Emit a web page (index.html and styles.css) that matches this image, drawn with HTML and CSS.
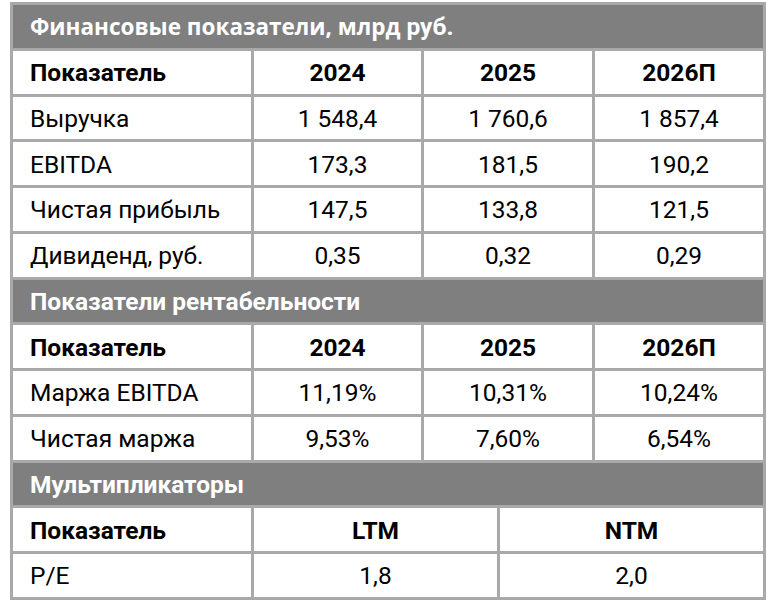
FILE: index.html
```html
<!DOCTYPE html>
<html lang="ru">
<head>
<meta charset="utf-8">
<title>Финансовые показатели</title>
<link rel="stylesheet" href="styles.css">
</head>
<body>
<div class="sheet">
  <div class="row band"><div class="cell head first">Финансовые показатели, млрд <span class="alt">руб.</span></div></div>
  <div class="row four bold">
    <div class="cell label">Показатель</div><div class="cell">2024</div><div class="cell">2025</div><div class="cell">2026П</div>
  </div>
  <div class="row four">
    <div class="cell label">Выручка</div><div class="cell">1 548,4</div><div class="cell">1 760,6</div><div class="cell">1 857,4</div>
  </div>
  <div class="row four">
    <div class="cell label">EBITDA</div><div class="cell">173,3</div><div class="cell">181,5</div><div class="cell">190,2</div>
  </div>
  <div class="row four">
    <div class="cell label">Чистая прибыль</div><div class="cell">147,5</div><div class="cell">133,8</div><div class="cell">121,5</div>
  </div>
  <div class="row four">
    <div class="cell label">Дивиденд, руб.</div><div class="cell">0,35</div><div class="cell">0,32</div><div class="cell">0,29</div>
  </div>
  <div class="row band"><div class="cell head">Показатели рентабельности</div></div>
  <div class="row four bold">
    <div class="cell label">Показатель</div><div class="cell">2024</div><div class="cell">2025</div><div class="cell">2026П</div>
  </div>
  <div class="row four">
    <div class="cell label">Маржа EBITDA</div><div class="cell">11,19%</div><div class="cell">10,31%</div><div class="cell">10,24%</div>
  </div>
  <div class="row four">
    <div class="cell label">Чистая маржа</div><div class="cell">9,53%</div><div class="cell">7,60%</div><div class="cell">6,54%</div>
  </div>
  <div class="row band"><div class="cell head">Мультипликаторы</div></div>
  <div class="row three bold">
    <div class="cell label">Показатель</div><div class="cell">LTM</div><div class="cell">NTM</div>
  </div>
  <div class="row three">
    <div class="cell label">P/E</div><div class="cell">1,8</div><div class="cell">2,0</div>
  </div>
</div>
</body>
</html>
```

FILE: styles.css
```css
html, body {
  margin: 0;
  padding: 0;
  background: #ffffff;
}
body {
  padding: 2px 0 0 10px;
  font-family: Roboto, "Noto Sans", sans-serif;
  color: #000000;
}
.sheet {
  width: 756px;
  box-sizing: border-box;
  background: #a9a9a9;
  padding: 3px;
  display: flex;
  flex-direction: column;
  gap: 3px;
}
.row {
  display: grid;
  gap: 3px;
  height: 42.75px;
}
.band { grid-template-columns: 1fr; }
.four { grid-template-columns: 238px 167px 168px 168px; }
.three { grid-template-columns: 238px 243px 263px; }
.cell {
  background: #ffffff;
  display: flex;
  align-items: center;
  justify-content: center;
  font-size: 24.5px;
  white-space: nowrap;
  padding-top: 1px;
  box-sizing: border-box;
}
.cell.label {
  justify-content: flex-start;
  padding-left: 17px;
}
.bold .cell { font-weight: 700; }
.cell.head {
  background: #7f7f7f;
  color: #ffffff;
  font-weight: 700;
  justify-content: flex-start;
  padding-left: 17px;
}
.cell.head.first {
  font-family: "Open Sans", "Noto Sans", sans-serif;
  font-size: 22.5px;
}
.cell.head.first .alt {
  font-family: Roboto, "Noto Sans", sans-serif;
  font-size: 24.5px;
  margin-left: 6px;
}
```
